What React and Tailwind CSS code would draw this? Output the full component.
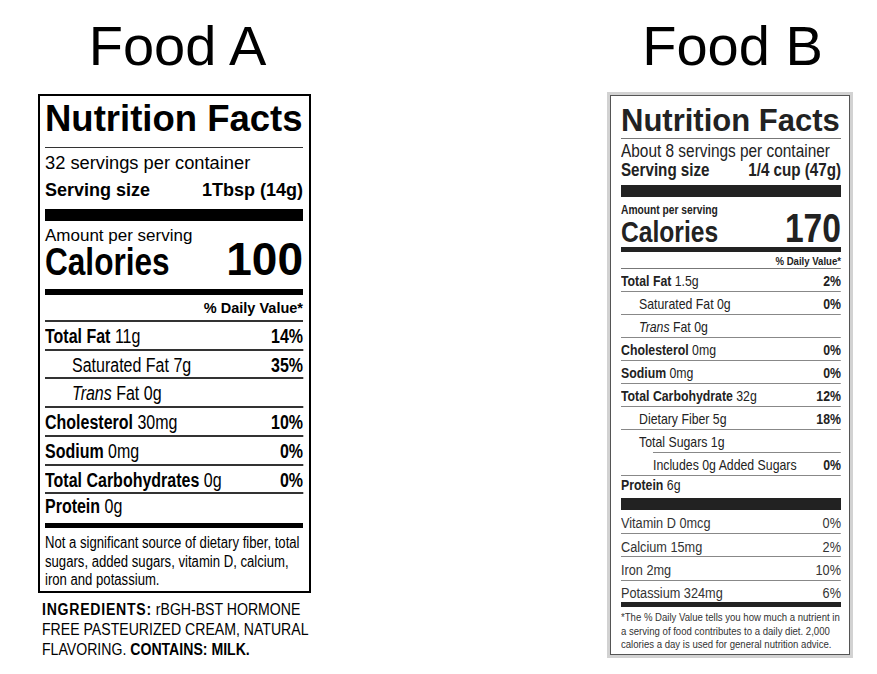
const SANS = "font-['Liberation_Sans',Arial,sans-serif]";

// No condensed face is installed, so Liberation Sans is squeezed to the
// width of Arial Narrow. The wrapper is widened first so it lands on 100%.
function Narrow({ className = '', children }) {
  return <div className={`${SANS} w-[121.95%] origin-left scale-x-[0.82] ${className}`}>{children}</div>;
}

const rowsA = [
  { bold: 'Total Fat', rest: '11g', pct: '14%' },
  { label: 'Saturated Fat 7g', pct: '35%', indent: true },
  { trans: true, indent: true },
  { bold: 'Cholesterol', rest: '30mg', pct: '10%' },
  { bold: 'Sodium', rest: '0mg', pct: '0%' },
  { bold: 'Total Carbohydrates', rest: '0g', pct: '0%' },
];

const rowsB = [
  { bold: 'Total Fat', rest: '1.5g', pct: '2%' },
  { label: 'Saturated Fat 0g', pct: '0%', indent: 'pl-[22px]' },
  { trans: true, indent: 'pl-[22px]' },
  { bold: 'Cholesterol', rest: '0mg', pct: '0%' },
  { bold: 'Sodium', rest: '0mg', pct: '0%' },
  { bold: 'Total Carbohydrate', rest: '32g', pct: '12%' },
  { label: 'Dietary Fiber 5g', pct: '18%', indent: 'pl-[22px]' },
  { label: 'Total Sugars 1g', indent: 'pl-[22px]', lineIndent: 'ml-[39px]' },
  { label: 'Includes 0g Added Sugars', pct: '0%', indent: 'pl-[39px]' },
];

const vitamins = [
  { label: 'Vitamin D 0mcg', pct: '0%' },
  { label: 'Calcium 15mg', pct: '2%' },
  { label: 'Iron 2mg', pct: '10%' },
];

function RowLabel({ row }) {
  if (row.trans) {
    return (
      <span>
        <i>Trans</i> Fat 0g
      </span>
    );
  }
  if (row.bold) {
    return (
      <span>
        <b>{row.bold}</b> {row.rest}
      </span>
    );
  }
  return <span>{row.label}</span>;
}

function LabelA() {
  return (
    <div className="w-[273px] mt-[16px] border-2 border-black pl-[5px] pr-[6px] pb-[2px] text-black">
      <div className={`${SANS} font-bold text-[36.5px] leading-[38px] pt-[4px] pb-[9px] border-b border-[#333] whitespace-nowrap`}>
        Nutrition Facts
      </div>
      <div className={`${SANS} text-[18.3px] leading-[22px] pt-[4px] whitespace-nowrap`}>32 servings per container</div>
      <div className={`${SANS} font-bold text-[18px] leading-[22px] pt-[5px] flex justify-between whitespace-nowrap`}>
        <span>Serving size</span>
        <span>1Tbsp (14g)</span>
      </div>
      <div className="mt-[8px] h-[12px] bg-black" />
      <div className={`${SANS} text-[17px] leading-[20px] pt-[5px]`}>Amount per serving</div>
      <div className={`${SANS} flex items-baseline justify-between leading-[26px] font-bold`}>
        <span className="inline-block origin-left scale-x-[0.82] text-[38.5px]">Calories</span>
        <span className="text-[46px]">100</span>
      </div>
      <div className="mt-[14px] h-[6px] bg-black" />
      <div className={`${SANS} font-bold text-[14.5px] leading-[16px] pt-[5px] pb-[4px] text-right border-b-2 border-[#333]`}>
        % Daily Value*
      </div>
      <Narrow className="text-[19.5px]">
        {rowsA.map((row, i) => (
          <div
            key={i}
            className={`flex justify-between pt-[3px] leading-[23.7px] border-b-2 border-[#333] whitespace-nowrap ${row.indent ? 'pl-[33px]' : ''}`}
          >
            <RowLabel row={row} />
            {row.pct && <b>{row.pct}</b>}
          </div>
        ))}
        <div className="pt-[1px] leading-[22px]">
          <b>Protein</b> 0g
        </div>
      </Narrow>
      <div className="mt-[6px] h-[5px] bg-black" />
      <Narrow className="text-[16px] leading-[18.3px] pt-[6px] whitespace-nowrap">
        Not a significant source of dietary fiber, total
        <br />
        sugars, added sugars, vitamin D, calcium,
        <br />
        iron and potassium.
      </Narrow>
    </div>
  );
}

function LabelB() {
  return (
    <div className="w-[246px] mt-[14px] bg-[#d2d2d2] p-[3px]">
      <div className="border border-[#555] bg-white pl-[10px] pr-[8px] pb-[4px] text-[#222]">
        <div className={`${SANS} font-bold text-[31px] leading-[34px] pt-[8px] border-b border-[#777] whitespace-nowrap`}>
          Nutrition Facts
        </div>
        <Narrow className="text-[18.8px] leading-[20px] pt-[2px] whitespace-nowrap">About 8 servings per container</Narrow>
        <Narrow className="font-bold text-[18.5px] leading-[18px] flex justify-between whitespace-nowrap">
          <span>Serving size</span>
          <span>1/4 cup (47g)</span>
        </Narrow>
        <div className="mt-[6px] h-[12px] bg-[#222]" />
        <Narrow className="font-bold text-[12.5px] leading-[12px] pt-[7px]">Amount per serving</Narrow>
        <Narrow className="flex items-baseline justify-between leading-[24px] font-bold">
          <span className="text-[30px]">Calories</span>
          <span className="text-[41px]">170</span>
        </Narrow>
        <div className="mt-[3px] h-[5px] bg-[#222]" />
        <Narrow className="font-bold text-[11.7px] leading-[14px] pt-[2px] text-right border-b border-[#777]">
          % Daily Value*
        </Narrow>
        <Narrow className="text-[15px]">
          {rowsB.map((row, i) => (
            <div key={i}>
              <div className={`flex justify-between pt-[2px] leading-[20px] whitespace-nowrap ${row.indent || ''}`}>
                <RowLabel row={row} />
                {row.pct && <b>{row.pct}</b>}
              </div>
              <div className={`h-px bg-[#888] ${row.lineIndent || ''}`} />
            </div>
          ))}
          <div className="pt-[1px] leading-[16px]">
            <b>Protein</b> 6g
          </div>
        </Narrow>
        <div className="mt-[5px] h-[12px] bg-[#222]" />
        <Narrow className="text-[15.5px] text-[#333]">
          {vitamins.map((v) => (
            <div key={v.label}>
              <div className="flex justify-between pt-[3px] leading-[19.6px]">
                <span>{v.label}</span>
                <span>{v.pct}</span>
              </div>
              <div className="h-px bg-[#888]" />
            </div>
          ))}
          <div className="flex justify-between pt-[3px] leading-[18px]">
            <span>Potassium 324mg</span>
            <span>6%</span>
          </div>
        </Narrow>
        <div className="h-[5px] bg-[#222]" />
        <Narrow className="text-[11.7px] leading-[13.3px] pt-[3.5px] text-[#333] whitespace-nowrap">
          *The % Daily Value tells you how much a nutrient in
          <br />
          a serving of food contributes to a daily diet. 2,000
          <br />
          calories a day is used for general nutrition advice.
        </Narrow>
      </div>
    </div>
  );
}

export default function App() {
  return (
    <div className="w-[877px] h-[674px] bg-white flex items-start overflow-hidden">
      {/* Food A */}
      <div className="ml-[38px] w-[273px]">
        <h1 className={`${SANS} text-[56px] leading-[64px] pt-[14px] pl-[6px] text-center text-black`}>Food A</h1>
        <LabelA />
        <div className="pl-[4px] w-[269px]">
          <Narrow className="text-[17.2px] leading-[20px] pt-[6px] text-black whitespace-nowrap">
            <b className="tracking-[0.9px]">INGREDIENTS:</b> rBGH-BST HORMONE
            <br />
            FREE PASTEURIZED CREAM, NATURAL
            <br />
            FLAVORING. <b>CONTAINS: MILK.</b>
          </Narrow>
        </div>
      </div>

      {/* Food B */}
      <div className="ml-[296px] w-[246px]">
        <h1 className={`${SANS} text-[56px] leading-[64px] pt-[14px] pl-[5px] text-center text-black`}>Food B</h1>
        <LabelB />
      </div>
    </div>
  );
}
